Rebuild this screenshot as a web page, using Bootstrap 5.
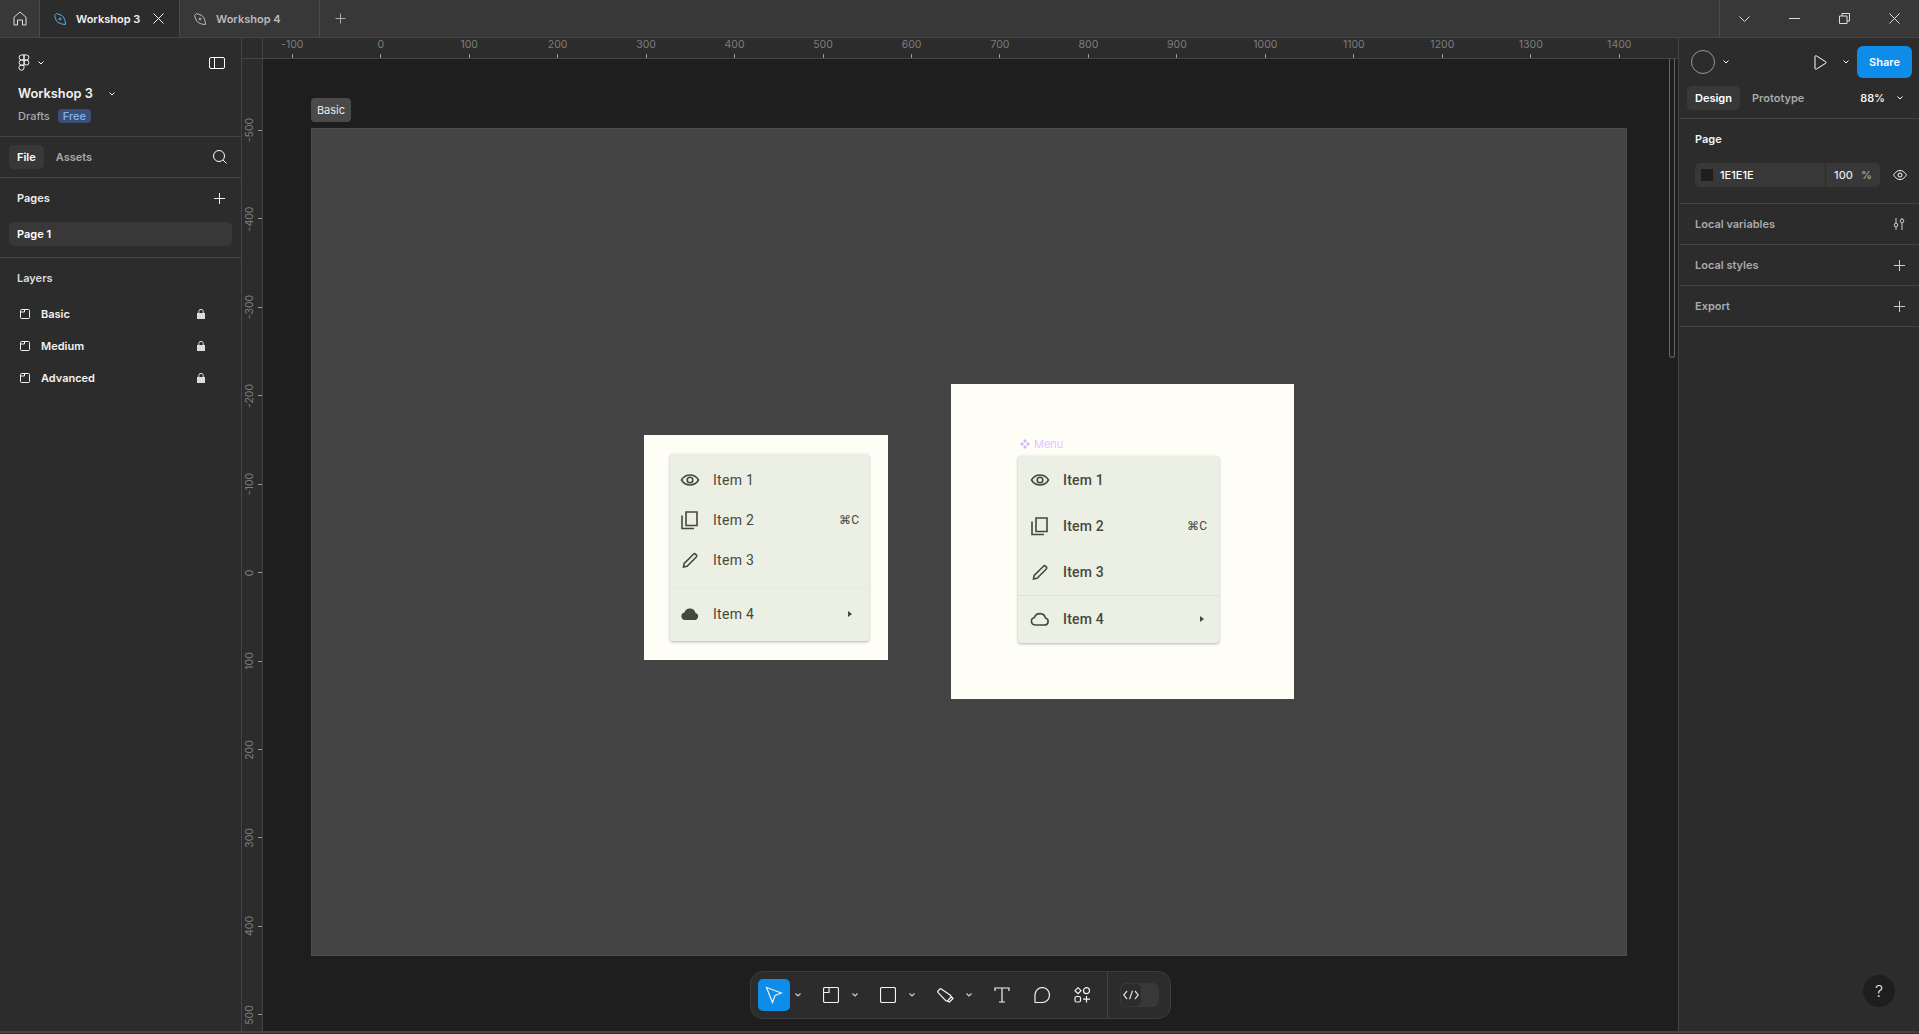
<!DOCTYPE html>
<html lang="en">
<head>
<meta charset="UTF-8">
<title>Workshop 3</title>
<link rel="stylesheet" href="https://cdn.jsdelivr.net/npm/bootstrap@5.3.0/dist/css/bootstrap.min.css">
<style>
html, body { height: 100%; overflow: hidden; }
body { background: #2c2c2c; color: #fff; font-family: Inter, "Liberation Sans", sans-serif; font-size: 11px; font-weight: 500; line-height: 16px; }
svg { display: block; flex: none; fill: none; stroke: currentColor; stroke-width: 1; }
.app-shell { width: 1919px; height: 1034px; }
.tabbar { height: 38px; background: #383838; border-bottom: 1px solid #444; }
.home-tab { width: 40px; border-right: 1px solid #4a4a4a; color: #ddd; }
.file-tab { width: 140px; padding-left: 13px; gap: 9px; border-right: 1px solid #4a4a4a; color: #bbb; font-weight: 600; white-space: nowrap; }
.file-tab.is-open { background: #2c2c2c; color: #f2f2f2; }
.tab-nib-on { color: #5aaee8; }
.tab-close { margin-left: auto; margin-right: 15px; }
.add-tab { width: 40px; color: #aaa; }
.win-ctrls { width: 200px; border-left: 1px solid #4a4a4a; color: #ddd; }
.win-ctrls > div { width: 50px; }
.left-pane { width: 242px; border-right: 1px solid #444; }
.pane-sec { border-bottom: 1px solid #444; }
.file-head { height: 99px; padding: 16px 16px 0 18px; }
.file-title { font-size: 12.8px; font-weight: 600; margin-top: 15px; color: #f2f2f2; }
.drafts-line { margin-top: 6px; }
.muted-txt { color: #a8a8a8; }
.plan-tag { background: #3b4f78; color: #7cb7ee; border-radius: 4px; padding: 0 5px; margin-left: 8px; }
.pane-tabs { height: 41px; padding: 0 14px 0 9px; }
.tab-pill { padding: 4px 8px; border-radius: 5px; font-weight: 600; }
.tab-pill.is-on { background: #383838; color: #fff; }
.tab-pill.is-off { color: #a8a8a8; }
.pages-sec { height: 80px; padding: 0 9px; }
.pages-head { height: 40px; margin-bottom: 4px; padding: 0 7px 0 8px; font-weight: 600; color: #eee; }
.page-row { height: 24px; background: #383838; border-radius: 5px; padding-left: 8px; font-weight: 600; }
.layers-head { height: 40px; padding-left: 17px; font-weight: 600; color: #ddd; }
.layer-row { height: 32px; padding: 0 36px 0 20px; gap: 11px; font-weight: 600; color: #f2f2f2; }
.lock-ico { stroke: #ddd; }
.lock-ico rect { fill: #ddd; }
.center-area { width: 1436px; }
.ruler-corner { width: 21px; border-right: 1px solid #444; border-bottom: 1px solid #444; }
.ruler-top { height: 21px; border-bottom: 1px solid #444; overflow: hidden; color: #7d7d7d; font-size: 10.5px; font-weight: 400; }
.ruler-top .tick-cell { width: 88.48px; flex: none; text-align: center; line-height: 14px; }
.ruler-top .tick-cell::after { content: ""; display: block; width: 1px; height: 4px; background: #999; margin: 2px auto 0; }
.ruler-top .tick-first { margin-left: -15px; }
.ruler-left { width: 21px; border-right: 1px solid #444; overflow: hidden; color: #7d7d7d; font-size: 10.5px; font-weight: 400; }
.ruler-left .tick-cell { height: 88.48px; flex: none; display: flex; align-items: center; justify-content: flex-end; }
.ruler-left .tick-txt { transform: rotate(-90deg); width: 12px; white-space: nowrap; display: flex; justify-content: center; margin-right: 2px; }
.ruler-left .tick-cell::after { content: ""; display: block; width: 4px; height: 1px; background: #999; flex: none; }
.ruler-left .tick-first { margin-top: 27px; }
.free-canvas { background: #1e1e1e; position: relative; overflow: hidden; }
.frame-tag { position: absolute; left: 48px; top: 39px; height: 24px; width: 40px; background: #4a4a4a; border-radius: 4px; color: #e6e6e6; font-weight: 400; }
.frame-bg { position: absolute; left: 48px; top: 69px; width: 1316px; height: 828px; background: #444; border: 1px solid #4c4c4c; }
.sheet { position: absolute; background: #fffef6; }
.sheet-a { left: 381px; top: 376px; width: 244px; height: 225px; }
.sheet-b { left: 688px; top: 325px; width: 343px; height: 315px; }
.menu-box { position: absolute; background: #ecefe3; color: #45483f; box-shadow: 0 1px 3px rgba(0,0,0,.3); border-radius: 3px; font-family: Roboto, sans-serif; font-size: 14px; font-weight: 400; letter-spacing: .3px; }
.menu-a { left: 26px; top: 19px; width: 199px; height: 187px; padding-top: 6px; }
.menu-b { left: 67px; top: 72px; width: 201px; height: 187px; padding-top: 1px; font-weight: 500; letter-spacing: .2px; }
.menu-row { gap: 13px; padding: 0 10px; }
.menu-a .menu-row { height: 40px; }
.menu-b .menu-row { height: 46px; padding: 0 12px; }
.menu-a .row-last { border-top: 1px solid #e6e9dd; margin-top: 7px; height: 53px; }
.menu-b .row-last { border-top: 1px solid #dfe2d7; }
.item-ico { width: 20px; height: 20px; stroke-width: 1.6; }
.item-ico.is-filled { fill: #45483f; stroke: none; }
.key-hint { margin-left: auto; font-size: 12px; font-weight: 400; letter-spacing: 0; }
.sub-arrow { margin-left: auto; width: 0; height: 0; border-left: 4px solid #45483f; border-top: 3.5px solid transparent; border-bottom: 3.5px solid transparent; }
.menu-a .sub-arrow { margin-right: 7px; }
.menu-b .sub-arrow { margin-right: 3px; }
.comp-label { position: absolute; left: 69px; top: 52px; color: #dfc6ff; font-size: 11px; font-weight: 400; gap: 4px; }
.comp-ico { fill: #d6b4ff; stroke: none; }
.tool-dock { position: absolute; left: 487px; top: 912px; width: 421px; height: 48px; background: #2c2c2c; border: 1px solid #3d3d3d; border-radius: 13px; padding: 0 7px; color: #f2f2f2; }
.tool-dock svg { stroke-width: 1.2; }
.tool-btn { width: 32px; height: 32px; border-radius: 5px; flex: none; }
.tool-btn.is-on { background: #0d8ce9; }
.tool-gap { margin-left: 9px; }
.tool-caret { width: 16px; color: #ccc; flex: none; }
.tool-sep { width: 1px; height: 46px; background: #444; margin: 0 12px 0 9px; flex: none; }
.code-switch { width: 39px; height: 24px; background: #383838; border-radius: 6px; flex: none; }
.code-knob { width: 22px; height: 24px; background: #2c2c2c; border: 1px solid #383838; border-radius: 6px; color: #ddd; }
.scroll-thumb { position: absolute; right: 3px; top: 0; width: 6px; height: 299px; border: 1px solid #666; border-top: 0; border-radius: 0 0 3px 3px; background: #1e1e1e; }
.right-pane { width: 241px; border-left: 1px solid #444; }
.top-actions { height: 46px; padding: 8px 7px 0 12px; }
.user-ring { width: 24px; height: 24px; border: 1px solid #999; border-radius: 50%; }
.share-btn { width: 55px; height: 32px; border-radius: 6px; background: #0d8ce9; color: #fff; font-size: 11px; font-weight: 600; border: 0; padding: 0; }
.design-row { height: 35px; padding: 2px 16px 0 8px; border-bottom: 1px solid #444; }
.zoom-chev { margin-left: 12px; }
.page-sec { height: 85px; padding: 8px 12px 0 16px; }
.sec-title { font-weight: 600; color: #f2f2f2; height: 24px; }
.color-line { margin-top: 12px; }
.color-field { width: 185px; height: 24px; background: #383838; border-radius: 5px; }
.swatch { width: 12px; height: 12px; background: #1e1e1e; margin: 0 7px 0 6px; }
.field-sep { width: 1px; height: 24px; background: #2c2c2c; margin-left: auto; }
.pct-val { width: 35px; text-align: center; color: #e6e6e6; }
.pct-sign { width: 19px; color: #aaa; }
.prop-row { height: 41px; padding: 0 14px 0 16px; color: #aaa; font-weight: 600; }
.prop-row svg { color: #ccc; }
.help-btn { position: absolute; right: 24px; bottom: 24px; width: 32px; height: 32px; border-radius: 50%; background: #1e1e1e; color: #e6e6e6; font-size: 16px; font-weight: 300; }
.bottom-line { height: 3px; background: #2c2c2c; border-top: 2px solid #444; }
</style>
</head>
<body>
<div class="app-shell d-flex flex-column">
  <div class="tabbar d-flex flex-shrink-0">
    <div class="home-tab d-flex align-items-center justify-content-center">
      <svg width="14" height="15" viewBox="0 0 14 15"><path d="M1 6.2 7 1l6 5.2V14H9.5V9h-5v5H1z"/></svg>
    </div>
    <div class="file-tab is-open d-flex align-items-center">
      <svg class="tab-nib-on" width="14" height="14" viewBox="0 0 14 14"><path d="M1.5 3.500 3.500 1.500 9 3.500C11 5 12.500 9 12.500 12.500 9 12.500 5 11 3.500 9z"/><circle cx="7" cy="7" r="1"/></svg>
      <span>Workshop 3</span>
      <svg class="tab-close" width="11" height="11" viewBox="0 0 11 11"><path d="M.5.5l10 10M10.500.5l-10 10"/></svg>
    </div>
    <div class="file-tab d-flex align-items-center">
      <svg width="14" height="14" viewBox="0 0 14 14"><path d="M1.5 3.500 3.500 1.500 9 3.500C11 5 12.500 9 12.500 12.500 9 12.500 5 11 3.500 9z"/><circle cx="7" cy="7" r="1"/></svg>
      <span>Workshop 4</span>
    </div>
    <div class="add-tab d-flex align-items-center justify-content-center">
      <svg width="11" height="11" viewBox="0 0 11 11"><path d="M5.500.5v10M.5 5.500h10"/></svg>
    </div>
    <div class="win-ctrls ms-auto d-flex align-items-center">
      <div class="d-flex justify-content-center"><svg width="11" height="6" viewBox="0 0 11 6"><path d="M.5.5l5 5 5-5"/></svg></div>
      <div class="d-flex justify-content-center"><svg width="11" height="1" viewBox="0 0 11 1"><path d="M0 .5h11"/></svg></div>
      <div class="d-flex justify-content-center"><svg width="11" height="11" viewBox="0 0 11 11"><path d="M.5 3h7.500v7.500H.5zM3 3V.5h7.500V8H8"/></svg></div>
      <div class="d-flex justify-content-center"><svg width="11" height="11" viewBox="0 0 11 11"><path d="M.5.5l10 10M10.500.5l-10 10"/></svg></div>
    </div>
  </div>

  <div class="d-flex flex-grow-1 overflow-hidden">
    <div class="left-pane d-flex flex-column flex-shrink-0">
      <div class="pane-sec file-head">
        <div class="d-flex align-items-center justify-content-between">
          <div class="d-flex align-items-center gap-2">
            <svg width="12" height="17" viewBox="0 0 12 18"><path d="M6 1H3.500a2.700 2.700 0 0 0 0 5.400H6zM6 1h2.500a2.700 2.700 0 0 1 0 5.400H6zM6 6.400H3.500a2.700 2.700 0 0 0 0 5.400H6zM11.200 9.100a2.600 2.600 0 1 1-5.200 0 2.600 2.600 0 0 1 5.200 0zM6 11.800H3.500a2.700 2.700 0 1 0 2.500 2.700z"/></svg>
            <svg width="6" height="4" viewBox="0 0 6 4"><path d="M.5.5l2.500 2.500L5.500.5"/></svg>
          </div>
          <svg width="16" height="12" viewBox="0 0 16 12"><rect x=".5" y=".5" width="15" height="11" rx="1.500"/><path d="M5.500.5v11"/></svg>
        </div>
        <div class="file-title d-flex align-items-center">Workshop 3<svg class="ms-3" width="6" height="4" viewBox="0 0 6 4"><path d="M.5.5l2.500 2.500L5.500.5"/></svg></div>
        <div class="drafts-line"><span class="muted-txt">Drafts</span><span class="plan-tag">Free</span></div>
      </div>
      <div class="pane-sec pane-tabs d-flex align-items-center">
        <span class="tab-pill is-on">File</span>
        <span class="tab-pill is-off ms-1">Assets</span>
        <svg class="ms-auto" width="14" height="14" viewBox="0 0 14 14"><circle cx="6" cy="6" r="5.500"/><path d="M10 10l3.500 3.500"/></svg>
      </div>
      <div class="pane-sec pages-sec">
        <div class="pages-head d-flex align-items-center justify-content-between">
          <span>Pages</span>
          <svg width="11" height="11" viewBox="0 0 11 11"><path d="M5.500 0v11M0 5.500h11"/></svg>
        </div>
        <div class="page-row d-flex align-items-center">Page 1</div>
      </div>
      <div class="layers-head d-flex align-items-center">Layers</div>
      <div id="layersList"></div>
    </div>

    <div class="center-area d-flex flex-column flex-shrink-0">
      <div class="d-flex flex-shrink-0">
        <div class="ruler-corner flex-shrink-0"></div>
        <div class="ruler-top d-flex flex-grow-1" id="rulerTop"></div>
      </div>
      <div class="d-flex flex-grow-1 overflow-hidden">
        <div class="ruler-left d-flex flex-column flex-shrink-0" id="rulerLeft"></div>
        <div class="free-canvas flex-grow-1">
          <div class="frame-tag d-flex align-items-center justify-content-center">Basic</div>
          <div class="frame-bg"></div>
          <div class="sheet sheet-a">
            <div class="menu-box menu-a">
              <div class="menu-row d-flex align-items-center">
                <svg class="item-ico" viewBox="0 0 20 20"><path d="M1.500 10S4.500 5 10 5s8.500 5 8.500 5-3 5-8.500 5-8.500-5-8.500-5z"/><circle cx="10" cy="10" r="2.800"/></svg>Item 1
              </div>
              <div class="menu-row d-flex align-items-center">
                <svg class="item-ico" viewBox="0 0 20 20"><path d="M6 2h11v13.500H6zM2 5.500v13h12"/></svg>Item 2<span class="key-hint">⌘C</span>
              </div>
              <div class="menu-row d-flex align-items-center">
                <svg class="item-ico" viewBox="0 0 20 20"><path d="M3.500 17l.7-3.500L13.500 4.200a1.500 1.500 0 0 1 2.100 0l.7.7a1.500 1.500 0 0 1 0 2.100L7 16.300z"/></svg>Item 3
              </div>
              <div class="menu-row row-last d-flex align-items-center">
                <svg class="item-ico is-filled" viewBox="0 0 20 20"><path d="M5 16a3.800 3.800 0 0 1-.6-7.500A5.800 5.800 0 0 1 15.500 9a3.600 3.600 0 0 1-.3 7z"/></svg>Item 4<span class="sub-arrow"></span>
              </div>
            </div>
          </div>
          <div class="sheet sheet-b">
            <div class="comp-label d-flex align-items-center">
              <svg class="comp-ico" width="10" height="10" viewBox="0 0 10 10"><path d="M5 0l2 2-2 2-2-2zM5 6l2 2-2 2-2-2zM2 3l2 2-2 2-2-2zM8 3l2 2-2 2-2-2z"/></svg>Menu
            </div>
            <div class="menu-box menu-b">
              <div class="menu-row d-flex align-items-center">
                <svg class="item-ico" viewBox="0 0 20 20"><path d="M1.500 10S4.500 5 10 5s8.500 5 8.500 5-3 5-8.500 5-8.500-5-8.500-5z"/><circle cx="10" cy="10" r="2.800"/></svg>Item 1
              </div>
              <div class="menu-row d-flex align-items-center">
                <svg class="item-ico" viewBox="0 0 20 20"><path d="M6 2h11v13.500H6zM2 5.500v13h12"/></svg>Item 2<span class="key-hint">⌘C</span>
              </div>
              <div class="menu-row d-flex align-items-center">
                <svg class="item-ico" viewBox="0 0 20 20"><path d="M3.500 17l.7-3.500L13.500 4.200a1.500 1.500 0 0 1 2.100 0l.7.7a1.500 1.500 0 0 1 0 2.100L7 16.300z"/></svg>Item 3
              </div>
              <div class="menu-row row-last d-flex align-items-center">
                <svg class="item-ico" viewBox="0 0 20 20"><path d="M5 16a3.800 3.800 0 0 1-.6-7.500A5.800 5.800 0 0 1 15.500 9a3.600 3.600 0 0 1-.3 7z"/></svg>Item 4<span class="sub-arrow"></span>
              </div>
            </div>
          </div>
          <div class="tool-dock d-flex align-items-center">
            <div class="tool-btn is-on d-flex align-items-center justify-content-center"><svg width="18" height="18" viewBox="0 0 18 18"><path d="M1.500 1.500 16.500 7 10 9.500 7.500 16.500z"/></svg></div>
            <div class="tool-caret d-flex justify-content-center"><svg width="6" height="4" viewBox="0 0 6 4"><path d="M.5.5l2.500 2.500L5.500.5"/></svg></div>
            <div class="tool-btn tool-gap d-flex align-items-center justify-content-center"><svg width="16" height="16" viewBox="0 0 16 16"><rect x=".5" y=".5" width="15" height="15" rx="1.500"/><path d="M.5 5.500h5.500V.5"/></svg></div>
            <div class="tool-caret d-flex justify-content-center"><svg width="6" height="4" viewBox="0 0 6 4"><path d="M.5.5l2.500 2.500L5.500.5"/></svg></div>
            <div class="tool-btn tool-gap d-flex align-items-center justify-content-center"><svg width="16" height="16" viewBox="0 0 16 16"><rect x=".5" y=".5" width="15" height="15" rx="1.500"/></svg></div>
            <div class="tool-caret d-flex justify-content-center"><svg width="6" height="4" viewBox="0 0 6 4"><path d="M.5.5l2.500 2.500L5.500.5"/></svg></div>
            <div class="tool-btn tool-gap d-flex align-items-center justify-content-center"><svg width="17" height="15" viewBox="0 0 17 15"><path d="M1 3 3 1a1 1 0 0 1 1.300-.1L13 7l3 3.500-3.500 3.500-4-1.500L1 4.300A1 1 0 0 1 1 3zM10 13.500 14.500 8.500"/></svg></div>
            <div class="tool-caret d-flex justify-content-center"><svg width="6" height="4" viewBox="0 0 6 4"><path d="M.5.5l2.500 2.500L5.500.5"/></svg></div>
            <div class="tool-btn tool-gap d-flex align-items-center justify-content-center"><svg width="16" height="16" viewBox="0 0 16 16"><path d="M1 4V1h14v3M8 1v14M5 15h6"/></svg></div>
            <div class="tool-btn ms-2 d-flex align-items-center justify-content-center"><svg width="16" height="16" viewBox="0 0 16 16"><path d="M8 .5a7.500 7.500 0 1 1 0 15H1.500a.5.5 0 0 1-.5-.5V8A7.500 7.500 0 0 1 8 .5z"/></svg></div>
            <div class="tool-btn ms-2 d-flex align-items-center justify-content-center"><svg width="17" height="16" viewBox="0 0 17 16"><path d="M4 .7 7 3.700 4 6.700 1 3.700z"/><circle cx="12.500" cy="3.700" r="3"/><rect x="1" y="9.500" width="5.500" height="5.500" rx="1.500"/><path d="M12.500 9v6.500M9 12.200h7"/></svg></div>
            <div class="tool-sep"></div>
            <div class="code-switch"><div class="code-knob d-flex align-items-center justify-content-center"><svg width="16" height="10" viewBox="0 0 16 10"><path d="M4 1 .7 5 4 9M12 1l3.300 4L12 9M9.500 .7l-3 8.600"/></svg></div></div>
          </div>
          <div class="scroll-thumb"></div>
        </div>
      </div>
    </div>

    <div class="right-pane position-relative flex-shrink-0">
      <div class="top-actions d-flex align-items-start">
        <div class="d-flex align-items-center gap-2 mt-1"><div class="user-ring"></div><svg width="6" height="4" viewBox="0 0 6 4"><path d="M.5.5l2.500 2.500L5.500.5"/></svg></div>
        <div class="ms-auto d-flex align-items-center">
          <svg class="me-3" width="13" height="15" viewBox="0 0 13 15"><path d="M1 1.500c0-.8.700-1 1.300-.7l9.500 6c.5.300.5 1.100 0 1.400l-9.500 6c-.6.300-1.300 0-1.300-.7z"/></svg>
          <svg class="me-2" width="6" height="4" viewBox="0 0 6 4"><path d="M.5.5l2.500 2.500L5.500.5"/></svg>
          <button class="btn share-btn">Share</button>
        </div>
      </div>
      <div class="design-row d-flex align-items-start">
        <span class="tab-pill is-on">Design</span>
        <span class="tab-pill is-off ms-1">Prototype</span>
        <div class="ms-auto d-flex align-items-center mt-1">88%<svg class="zoom-chev" width="6" height="4" viewBox="0 0 6 4"><path d="M.5.5l2.500 2.500L5.500.5"/></svg></div>
      </div>
      <div class="pane-sec page-sec">
        <div class="sec-title d-flex align-items-center">Page</div>
        <div class="color-line d-flex align-items-center">
          <div class="color-field d-flex align-items-center">
            <span class="swatch"></span><span>1E1E1E</span><span class="field-sep"></span><span class="pct-val">100</span><span class="pct-sign">%</span>
          </div>
          <svg class="ms-auto" width="14" height="10" viewBox="0 0 14 10"><path d="M.5 5S3 .5 7 .5 13.500 5 13.500 5 11 9.500 7 9.500.5 5 .5 5z"/><circle cx="7" cy="5" r="2"/></svg>
        </div>
      </div>
      <div class="pane-sec prop-row d-flex align-items-center justify-content-between">
        <span>Local variables</span>
        <svg width="12" height="12" viewBox="0 0 12 12"><path d="M3 0v5M3 9v3M9 0v1M9 5v7"/><circle cx="3" cy="7" r="1.800"/><circle cx="9" cy="3" r="1.800"/></svg>
      </div>
      <div class="pane-sec prop-row d-flex align-items-center justify-content-between">
        <span>Local styles</span>
        <svg width="11" height="11" viewBox="0 0 11 11"><path d="M5.500 0v11M0 5.500h11"/></svg>
      </div>
      <div class="pane-sec prop-row d-flex align-items-center justify-content-between">
        <span>Export</span>
        <svg width="11" height="11" viewBox="0 0 11 11"><path d="M5.500 0v11M0 5.500h11"/></svg>
      </div>
      <div class="help-btn d-flex align-items-center justify-content-center">?</div>
    </div>
  </div>
  <div class="bottom-line flex-shrink-0"></div>
</div>
<script>
  // rulers: one cell per 100 units, canvas is at 88%
  var rulerTop = document.getElementById('rulerTop');
  for (var v = -100; v <= 1400; v += 100) {
    var c = document.createElement('div');
    c.className = 'tick-cell' + (v === -100 ? ' tick-first' : '');
    c.textContent = v;
    rulerTop.appendChild(c);
  }
  var rulerLeft = document.getElementById('rulerLeft');
  for (var h = -500; h <= 500; h += 100) {
    var r = document.createElement('div');
    r.className = 'tick-cell' + (h === -500 ? ' tick-first' : '');
    r.innerHTML = '<span class="tick-txt">' + h + '</span>';
    rulerLeft.appendChild(r);
  }
  var lockSvg = '<svg class="lock-ico ms-auto" width="8" height="10" viewBox="0 0 8 10"><path d="M1.800 4.500V2.500a2.200 2.200 0 0 1 4.400 0v2"/><rect x=".5" y="4.500" width="7" height="5"/></svg>';
  var frameSvg = '<svg width="10" height="10" viewBox="0 0 10 10"><rect x=".5" y=".5" width="9" height="9" rx="1"/><path d="M.5 3h4V.5"/></svg>';
  ['Basic', 'Medium', 'Advanced'].forEach(function (n) {
    var d = document.createElement('div');
    d.className = 'layer-row d-flex align-items-center';
    d.innerHTML = frameSvg + '<span>' + n + '</span>' + lockSvg;
    document.getElementById('layersList').appendChild(d);
  });
</script>
<script src="https://cdn.jsdelivr.net/npm/bootstrap@5.3.0/dist/js/bootstrap.bundle.min.js"></script>
</body>
</html>
